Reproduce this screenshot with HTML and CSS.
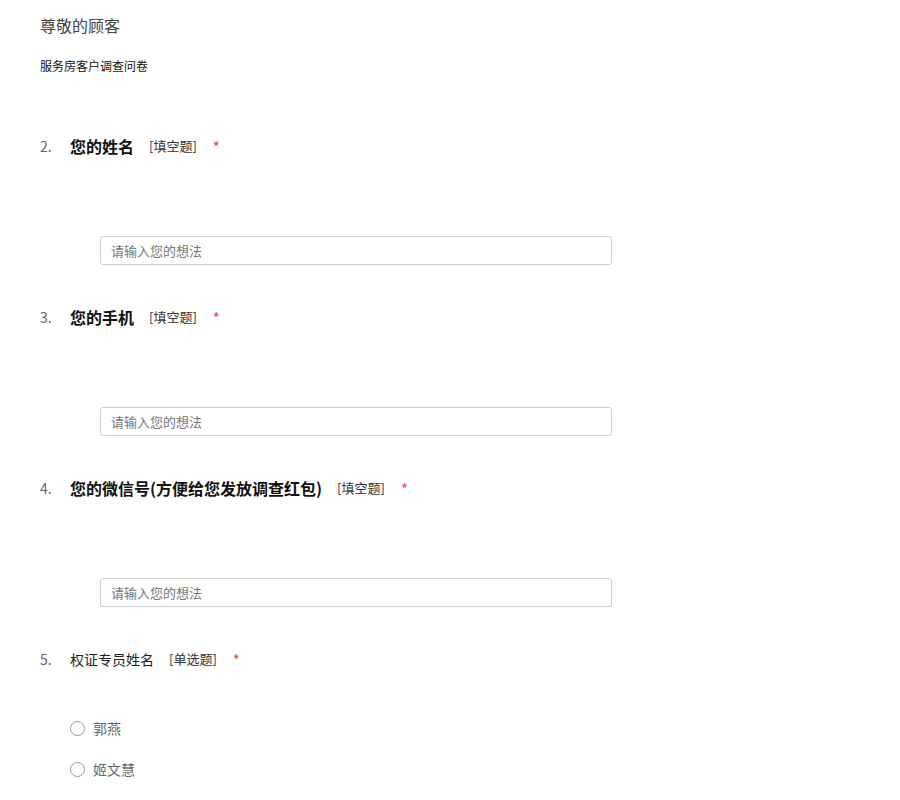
FILE: index.html
```html
<!DOCTYPE html>
<html lang="zh-CN">
<head>
<meta charset="utf-8">
<title>服务房客户调查问卷</title>
<link rel="stylesheet" href="styles.css">
</head>
<body>
<div class="page">
  <header class="header">
    <div class="title">尊敬的顾客</div>
    <div class="subtitle">服务房客户调查问卷</div>
  </header>

  <section class="question">
    <div class="q-head">
      <span class="q-num">2.</span>
      <span class="q-title strong">您的姓名</span>
      <span class="q-tag">[填空题]</span>
      <span class="q-star">*</span>
    </div>
    <div class="q-body">
      <input class="q-input" type="text" placeholder="请输入您的想法">
    </div>
  </section>

  <section class="question">
    <div class="q-head">
      <span class="q-num">3.</span>
      <span class="q-title strong">您的手机</span>
      <span class="q-tag">[填空题]</span>
      <span class="q-star">*</span>
    </div>
    <div class="q-body">
      <input class="q-input" type="text" placeholder="请输入您的想法">
    </div>
  </section>

  <section class="question">
    <div class="q-head">
      <span class="q-num">4.</span>
      <span class="q-title strong">您的微信号(方便给您发放调查红包)</span>
      <span class="q-tag">[填空题]</span>
      <span class="q-star">*</span>
    </div>
    <div class="q-body">
      <input class="q-input" type="text" placeholder="请输入您的想法">
    </div>
  </section>

  <section class="question choice">
    <div class="q-head">
      <span class="q-num">5.</span>
      <span class="q-title">权证专员姓名</span>
      <span class="q-tag">[单选题]</span>
      <span class="q-star">*</span>
    </div>
    <div class="options">
      <label class="option"><span class="radio"></span><span class="opt-text">郭燕</span></label>
      <label class="option"><span class="radio"></span><span class="opt-text">姬文慧</span></label>
    </div>
  </section>
</div>
</body>
</html>
```

FILE: styles.css
```css
html, body {
  margin: 0;
  padding: 0;
  background: #fff;
}
body {
  font-family: "Noto Sans CJK SC", "Microsoft YaHei", sans-serif;
  color: #333;
}
.page {
  padding: 0 40px;
}
.header {
  padding-top: 13px;
}
.title {
  font-size: 16px;
  line-height: 24px;
  color: #444;
}
.subtitle {
  margin-top: 21px;
  font-size: 12px;
  line-height: 16px;
  color: #111;
}
.question {
  margin-top: 60px;
}
.question + .question {
  margin-top: 40px;
}
.q-head {
  display: flex;
  align-items: center;
  height: 24px;
}
.q-num {
  width: 30px;
  font-size: 14px;
  color: #666;
  line-height: 24px;
}
.q-title {
  font-size: 14px;
  line-height: 24px;
  color: #222;
}
.q-title.strong {
  font-size: 16px;
  font-weight: bold;
  color: #111;
}
.q-tag {
  margin-left: 15px;
  font-size: 13px;
  line-height: 24px;
  color: #333;
}
.q-star {
  margin-left: 16px;
  font-size: 15px;
  line-height: 24px;
  color: #e5474b;
  position: relative;
  top: 1px;
}
.q-body {
  padding-top: 78px;
  padding-left: 60px;
}
.q-input {
  display: block;
  box-sizing: border-box;
  width: 512px;
  height: 29px;
  margin: 0;
  padding: 0 10px;
  border: 1px solid #ccc;
  border-radius: 3px;
  font-family: inherit;
  font-size: 13px;
  color: #333;
  outline: none;
}
.q-input::placeholder {
  color: #777;
}
.options {
  padding-top: 47px;
  padding-left: 30px;
  display: flex;
  flex-direction: column;
  gap: 21px;
}
.option {
  display: flex;
  align-items: center;
  height: 20px;
}
.radio {
  box-sizing: border-box;
  width: 15px;
  height: 15px;
  border: 1px solid #999;
  border-radius: 50%;
  background: #fff;
}
.opt-text {
  margin-left: 8px;
  font-size: 14px;
  line-height: 20px;
  color: #666;
}
```
